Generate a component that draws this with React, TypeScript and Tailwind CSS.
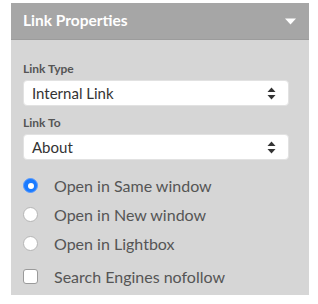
import React, { useState } from 'react';

const SelectArrows = () => (
  <svg width="9" height="13" viewBox="0 0 9 13" className="shrink-0">
    <path d="M4.5 0.5 L8.5 5 L0.5 5 Z" fill="#333" />
    <path d="M4.5 12.5 L8.5 8 L0.5 8 Z" fill="#333" />
  </svg>
);

const FakeSelect = ({ value }: { value: string }) => (
  <div className="h-[26px] w-[266px] bg-white rounded-[4px] border border-[#e2e2e2] flex items-center justify-between pl-[8px] pr-[12px]">
    <span className="text-[15px] text-[#333]">{value}</span>
    <SelectArrows />
  </div>
);

const App: React.FC = () => {
  const [target, setTarget] = useState('same');
  const [nofollow, setNofollow] = useState(false);

  const options = [
    { id: 'same', label: 'Open in Same window' },
    { id: 'new', label: 'Open in New window' },
    { id: 'lightbox', label: 'Open in Lightbox' },
  ];

  return (
    <div className="pt-[3px] pl-[11px] bg-white min-h-[304px]" style={{ fontFamily: 'Lato, "Open Sans", sans-serif' }}>
      <div className="w-[298px]">
        <div className="h-[37px] bg-[#a6a6a6] border-b border-[#9c9c9c] flex items-center justify-between pl-[12px] pr-[13px]">
          <span className="text-[15.5px] font-bold text-white">Link Properties</span>
          <svg width="11" height="7" viewBox="0 0 11 7">
            <path d="M0 0.5 L11 0.5 L5.5 6.5 Z" fill="#fff" />
          </svg>
        </div>
        <div className="bg-[#d6d6d6] h-[255px] pl-[12px] pt-[21px]">
          <div className="text-[12px] leading-[15px] font-bold text-[#555] mb-[4px]">Link Type</div>
          <FakeSelect value="Internal Link" />
          <div className="text-[12px] leading-[15px] font-bold text-[#555] mt-[9px] mb-[4px]">Link To</div>
          <FakeSelect value="About" />
          <div className="mt-[11px]">
            {options.map((o) => (
              <div key={o.id} className="h-[29px] flex items-center cursor-pointer" onClick={() => setTarget(o.id)}>
                {target === o.id ? (
                  <span className="w-[15px] h-[15px] rounded-full bg-[#1a7bff] border border-[#5a9bff] flex items-center justify-center">
                    <span className="w-[6px] h-[6px] rounded-full bg-white" />
                  </span>
                ) : (
                  <span className="w-[15px] h-[15px] rounded-full bg-white border border-[#b5b5b5]" />
                )}
                <span className="ml-[16px] text-[16px] text-[#555]">{o.label}</span>
              </div>
            ))}
            <div className="h-[29px] mt-[4px] flex items-center cursor-pointer" onClick={() => setNofollow(!nofollow)}>
              <span className={`w-[15px] h-[15px] rounded-[3px] border ${nofollow ? 'bg-[#1a7bff] border-[#1a7bff]' : 'bg-white border-[#9a9a9a]'}`} />
              <span className="ml-[16px] text-[16px] text-[#555]">Search Engines nofollow</span>
            </div>
          </div>
        </div>
      </div>
    </div>
  );
};

export default App;
